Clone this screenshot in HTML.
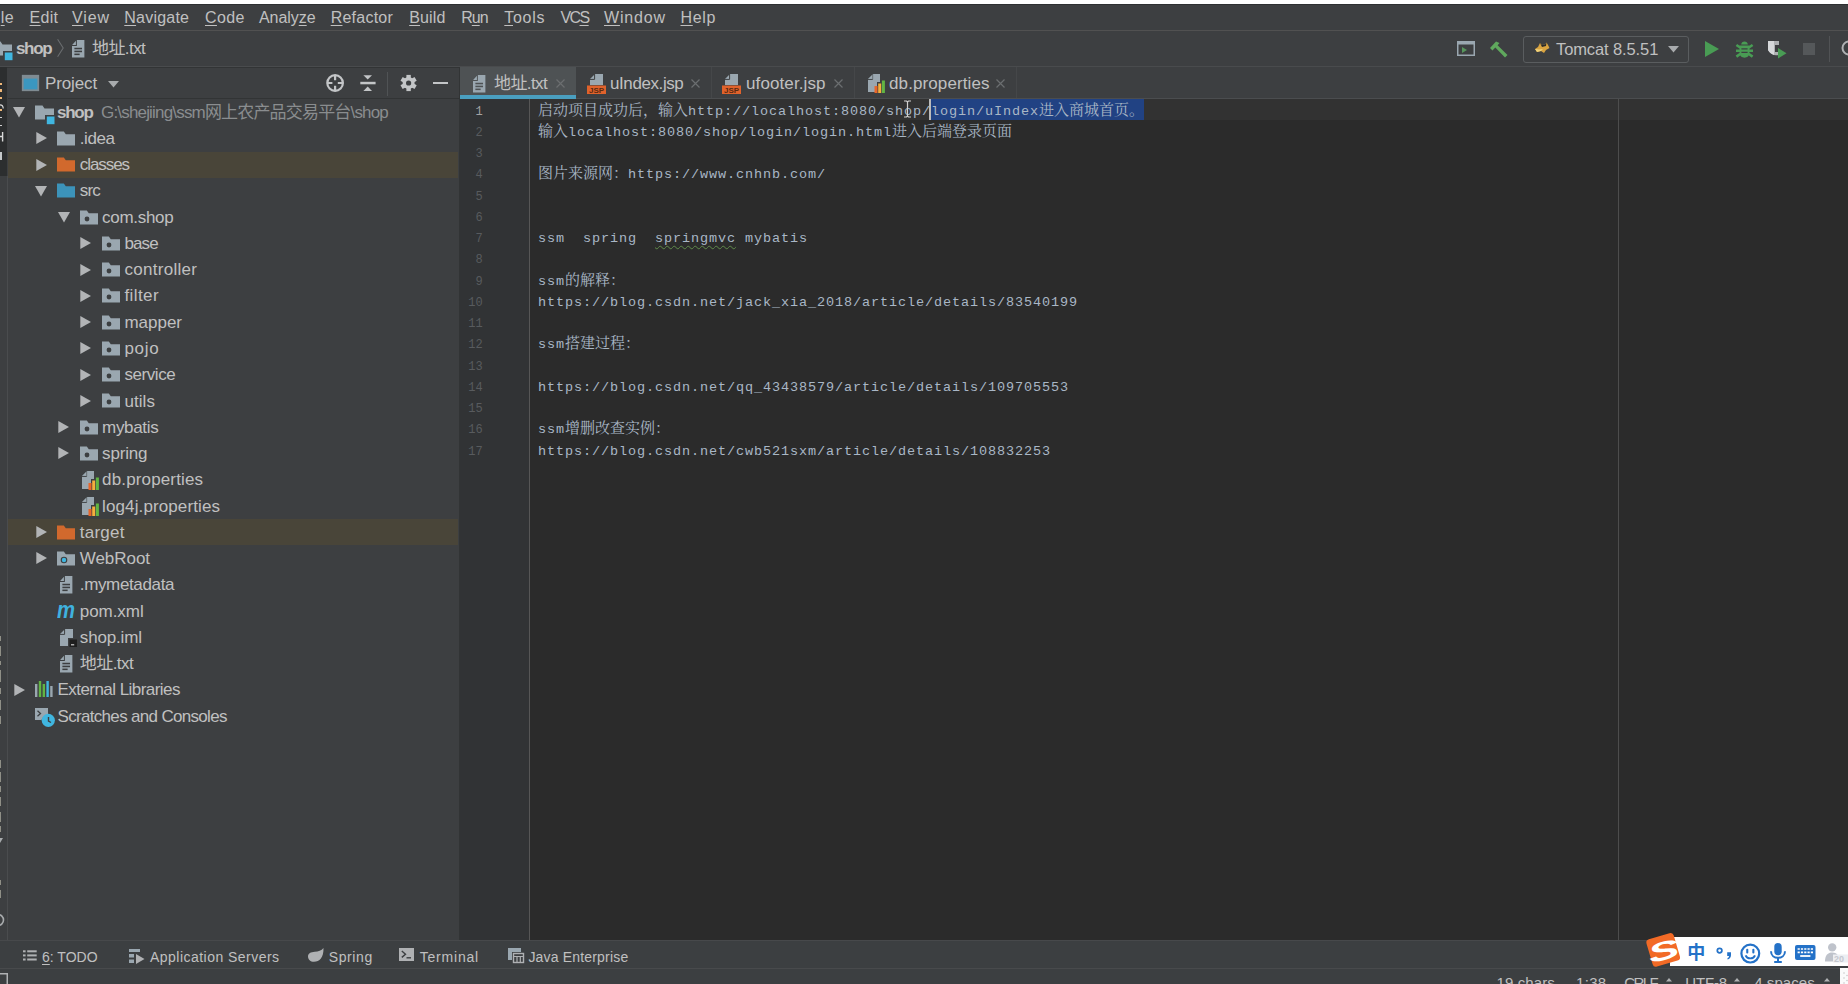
<!DOCTYPE html>
<html lang="zh"><head><meta charset="utf-8"><title>shop - 地址.txt</title>
<style>

html,body{margin:0;padding:0;}
body{width:1848px;height:984px;overflow:hidden;background:#3d3f41;position:relative;font-family:'Liberation Sans','Noto Sans CJK SC',sans-serif;color:#bbbbbb;font-size:17px;}
.a{position:absolute;}
.t{position:absolute;white-space:nowrap;line-height:20px;}
svg{position:absolute;overflow:visible;}
u{text-decoration:underline;text-underline-offset:2px;text-decoration-thickness:1px;}
.l{font-size:13.5px;letter-spacing:0.899px;}

</style></head><body>
<div class="a" style="left:0;top:0;width:1848px;height:4px;background:#ffffff"></div>
<div class="a" style="left:0;top:4px;width:1848px;height:1px;background:#2e3032"></div>
<div class="a" style="left:0;top:30px;width:1848px;height:1px;background:#515151"></div>
<div class="menu">
<div class="t" style="left:-13.5px;top:8.0px;color:#c0c0c0;font-family:'Liberation Sans','Noto Sans CJK SC',sans-serif;font-size:16px;font-weight:normal;line-height:20px;letter-spacing:0.43px;">Fi<u>l</u>e</div>
<div class="t" style="left:29.6px;top:8.0px;color:#c0c0c0;font-family:'Liberation Sans','Noto Sans CJK SC',sans-serif;font-size:16px;font-weight:normal;line-height:20px;letter-spacing:0.27px;"><u>E</u>dit</div>
<div class="t" style="left:72.0px;top:8.0px;color:#c0c0c0;font-family:'Liberation Sans','Noto Sans CJK SC',sans-serif;font-size:16px;font-weight:normal;line-height:20px;letter-spacing:0.86px;"><u>V</u>iew</div>
<div class="t" style="left:124.3px;top:8.0px;color:#c0c0c0;font-family:'Liberation Sans','Noto Sans CJK SC',sans-serif;font-size:16px;font-weight:normal;line-height:20px;letter-spacing:0.22px;"><u>N</u>avigate</div>
<div class="t" style="left:205.0px;top:8.0px;color:#c0c0c0;font-family:'Liberation Sans','Noto Sans CJK SC',sans-serif;font-size:16px;font-weight:normal;line-height:20px;letter-spacing:0.38px;"><u>C</u>ode</div>
<div class="t" style="left:259.0px;top:8.0px;color:#c0c0c0;font-family:'Liberation Sans','Noto Sans CJK SC',sans-serif;font-size:16px;font-weight:normal;line-height:20px;letter-spacing:-0.06px;">Analy<u>z</u>e</div>
<div class="t" style="left:330.7px;top:8.0px;color:#c0c0c0;font-family:'Liberation Sans','Noto Sans CJK SC',sans-serif;font-size:16px;font-weight:normal;line-height:20px;letter-spacing:0.23px;"><u>R</u>efactor</div>
<div class="t" style="left:409.2px;top:8.0px;color:#c0c0c0;font-family:'Liberation Sans','Noto Sans CJK SC',sans-serif;font-size:16px;font-weight:normal;line-height:20px;letter-spacing:0.16px;"><u>B</u>uild</div>
<div class="t" style="left:461.3px;top:8.0px;color:#c0c0c0;font-family:'Liberation Sans','Noto Sans CJK SC',sans-serif;font-size:16px;font-weight:normal;line-height:20px;letter-spacing:-1.04px;">R<u>u</u>n</div>
<div class="t" style="left:504.3px;top:8.0px;color:#c0c0c0;font-family:'Liberation Sans','Noto Sans CJK SC',sans-serif;font-size:16px;font-weight:normal;line-height:20px;letter-spacing:0.71px;"><u>T</u>ools</div>
<div class="t" style="left:560.4px;top:8.0px;color:#c0c0c0;font-family:'Liberation Sans','Noto Sans CJK SC',sans-serif;font-size:16px;font-weight:normal;line-height:20px;letter-spacing:-1.55px;">VC<u>S</u></div>
<div class="t" style="left:604.0px;top:8.0px;color:#c0c0c0;font-family:'Liberation Sans','Noto Sans CJK SC',sans-serif;font-size:16px;font-weight:normal;line-height:20px;letter-spacing:0.82px;"><u>W</u>indow</div>
<div class="t" style="left:680.5px;top:8.0px;color:#c0c0c0;font-family:'Liberation Sans','Noto Sans CJK SC',sans-serif;font-size:16px;font-weight:normal;line-height:20px;letter-spacing:0.66px;"><u>H</u>elp</div>
</div>
<div class="a" style="left:0;top:66px;width:1848px;height:1px;background:#494b4d"></div>
<div class="a" style="left:0;top:67px;width:459px;height:1px;background:#323435"></div>
<svg style="left:-7px;top:40.5px" width="22" height="20" viewBox="0 0 22 20"><path d="M0 0.5H7.5L9.5 3.5H19V10H10V14.5H0Z" fill="#9aa7b0"/><rect x="11.8" y="11.5" width="7.7" height="7.7" fill="#40b6e0"/></svg>
<div class="t" style="left:16.0px;top:38.5px;color:#c0c0c0;font-family:'Liberation Sans','Noto Sans CJK SC',sans-serif;font-size:17px;font-weight:bold;line-height:20px;letter-spacing:-1.34px;">shop</div>
<svg style="left:57px;top:39px" width="7" height="18" viewBox="0 0 7 18"><path d="M0.6 0.3L6.2 9L0.6 17.7" stroke="#6a6d6f" stroke-width="1.1" fill="none"/></svg>
<svg style="left:72px;top:40px" width="12.4" height="17.6" viewBox="0 0 13 17" preserveAspectRatio="none"><path d="M5 0H13V17H0V5Z" fill="#9aa7b0"/><path d="M5 0V5H0Z" fill="#9aa7b0" opacity="0.55"/><path d="M4.6 0V5.4H0" stroke="#3d3f41" stroke-width="1" fill="none"/><rect x="2.5" y="7.5" width="8" height="1.5" fill="#3d3f41"/><rect x="2.5" y="10.3" width="8" height="1.5" fill="#3d3f41"/><rect x="2.5" y="13.1" width="5.5" height="1.5" fill="#3d3f41"/></svg>
<div class="t" style="left:92.0px;top:38.5px;color:#c0c0c0;font-family:'Liberation Sans','Noto Sans CJK SC',sans-serif;font-size:17px;font-weight:normal;line-height:20px;letter-spacing:-0.57px;">地址.txt</div>
<svg style="left:1457px;top:41px" width="18" height="15" viewBox="0 0 18 15"><rect x="0.75" y="0.75" width="16.5" height="13.5" fill="none" stroke="#9aa7b0" stroke-width="1.5"/><rect x="0" y="0" width="18" height="3.5" fill="#9aa7b0"/><path d="M5 6L10 9L5 12Z" fill="#57965c"/></svg>
<svg style="left:1489px;top:40px" width="20" height="18" viewBox="0 0 20 18"><path d="M1 8L7 1.5L10.5 3L8.6 5.2L18.5 15L16 17.5L6.3 7.6L3.5 10.5Z" fill="#5fa85d"/></svg>
<div class="a" style="left:1523px;top:36px;width:164px;height:25px;border:1px solid #5a5d5f;border-radius:3px;box-sizing:content-box"></div>
<svg style="left:1534px;top:42px" width="16" height="13" viewBox="0 0 16 13"><path d="M1 7L4 5L6 1L8 3L11 2.5L12.5 0.5L14 3L15.5 6L12 8L10 11L7 9L3 10Z" fill="#d9a441"/><path d="M6 1L8 3L11 2.5L12.5 0.5L12 4L8 5Z" fill="#2b2b2b"/><path d="M1 7L5 7.5L9 7L7 9L3 10Z" fill="#f1d27a"/></svg>
<div class="t" style="left:1556.0px;top:39.0px;color:#c0c0c0;font-family:'Liberation Sans','Noto Sans CJK SC',sans-serif;font-size:16.5px;font-weight:normal;line-height:20px;letter-spacing:-0.11px;">Tomcat 8.5.51</div>
<svg style="left:1668px;top:46px" width="11" height="7" viewBox="0 0 11 7"><path d="M0 0H11L5.5 6.5Z" fill="#a8abad"/></svg>
<svg style="left:1705px;top:41px" width="14" height="16" viewBox="0 0 14 16"><path d="M0 0L14 8L0 16Z" fill="#499c54"/></svg>
<svg style="left:1735.5px;top:40px" width="17" height="18" viewBox="0 0 17 18"><path d="M3.6 5.4H13.4V12.6C13.4 16 11 17.8 8.5 17.8C6 17.8 3.6 16 3.6 12.6Z" fill="#499c54"/><path d="M5.2 4.6C5.2 0.6 11.8 0.6 11.8 4.6Z" fill="#499c54"/><path d="M0.4 5L4.5 7.8M16.6 5L12.5 7.8M0 10.8H4.4M17 10.8H12.6M0.4 16.6L4.5 13.8M16.6 16.6L12.5 13.8" stroke="#499c54" stroke-width="2.6" fill="none"/><path d="M5.4 8.8H11.6M5.4 12.4H11.6" stroke="#3c3f41" stroke-width="1.3"/></svg>
<svg style="left:1767px;top:40px" width="20" height="19" viewBox="0 0 20 19"><path d="M1 1H12V5H8V12H12V14.5C9 16.5 4 15 1 10Z" fill="#afb1b3"/><path d="M1 1H7V15C4 14 2 12 1 10Z" fill="#d6d8da"/><path d="M11 8L19.5 13.2L11 18.5Z" fill="#499c54"/></svg>
<div class="a" style="left:1803px;top:42.8px;width:12.3px;height:12px;background:#55585a"></div>
<div class="a" style="left:1829px;top:36px;width:1px;height:26px;background:#515355"></div>
<svg style="left:1841px;top:40px" width="16" height="16" viewBox="0 0 16 16"><circle cx="8" cy="8" r="6.5" fill="none" stroke="#afb1b3" stroke-width="2"/></svg>
<div class="a" style="left:0;top:67px;width:7px;height:109px;background:#2c2e2f"></div>
<div class="a" style="left:7px;top:176px;width:1px;height:764px;background:#4a4c4e"></div>
<div class="a" style="left:0;top:82.5px;width:1.5px;height:2.6px;background:#f0b878"></div>
<div class="a" style="left:0;top:89px;width:1.5px;height:2.6px;background:#f0b878"></div>
<div class="a" style="left:0;top:96.5px;width:1.5px;height:2.6px;background:#f0b878"></div>
<div class="a" style="left:0;top:108.5px;width:1.5px;height:2.6px;background:#f0b878"></div>
<svg style="left:0px;top:104px" width="4" height="5" viewBox="0 0 4 5"><path d="M0 0.8C2.5 0.8 3.2 2 3.2 4.5" stroke="#d8d8d8" stroke-width="1.2" fill="none"/></svg>
<div class="a" style="left:0;top:116.5px;width:1.6px;height:1.3px;background:#d0d0d0"></div>
<div class="a" style="left:0;top:125px;width:1.6px;height:1.3px;background:#d0d0d0"></div>
<svg style="left:0px;top:132px" width="4" height="10" viewBox="0 0 4 10"><path d="M0 4.5H2.6M2.6 0V9.5" stroke="#d8d8d8" stroke-width="1.4" fill="none"/></svg>
<div class="a" style="left:0;top:151.5px;width:2px;height:8px;background:#c4c8ca"></div>
<div class="a" style="left:0;top:636px;width:1.2px;height:5px;background:#8f8f86"></div>
<div class="a" style="left:0;top:646px;width:1.2px;height:10px;background:#8f8f86"></div>
<div class="a" style="left:0;top:661px;width:1.2px;height:4px;background:#8f8f86"></div>
<div class="a" style="left:0;top:670px;width:1.2px;height:12px;background:#8f8f86"></div>
<div class="a" style="left:0;top:688px;width:1.2px;height:6px;background:#8f8f86"></div>
<div class="a" style="left:0;top:700px;width:1.2px;height:10px;background:#8f8f86"></div>
<div class="a" style="left:0;top:716px;width:1.2px;height:8px;background:#8f8f86"></div>
<div class="a" style="left:0;top:760px;width:1.2px;height:8px;background:#8f8f86"></div>
<div class="a" style="left:0;top:772px;width:1.2px;height:10px;background:#8f8f86"></div>
<div class="a" style="left:0;top:786px;width:1.2px;height:6px;background:#8f8f86"></div>
<div class="a" style="left:0;top:797px;width:1.2px;height:9px;background:#8f8f86"></div>
<div class="a" style="left:0;top:812px;width:1.2px;height:10px;background:#8f8f86"></div>
<div class="a" style="left:0;top:826px;width:1.2px;height:6px;background:#8f8f86"></div>
<div class="a" style="left:0;top:880px;width:1.2px;height:5px;background:#8f8f86"></div>
<div class="a" style="left:0;top:890px;width:1.2px;height:8px;background:#8f8f86"></div>
<svg style="left:-8px;top:838px" width="12" height="12" viewBox="0 0 12 12"><path d="M0 0H11L5.5 9Z" fill="#a8abad"/></svg>
<svg style="left:-9px;top:913px" width="14" height="14" viewBox="0 0 14 14"><circle cx="7" cy="7" r="5.5" fill="none" stroke="#a8abad" stroke-width="1.6"/></svg>
<div class="a" style="left:8px;top:98px;width:451px;height:1px;background:#323435"></div>
<svg style="left:22px;top:75px" width="17" height="16" viewBox="0 0 17 16"><rect x="0.75" y="0.75" width="15.5" height="14.5" fill="#3b97c0" stroke="#7f8b92" stroke-width="1.8"/><rect x="0" y="0" width="17" height="3.6" fill="#7f8b92"/></svg>
<div class="t" style="left:45.0px;top:73.8px;color:#c0c0c0;font-family:'Liberation Sans','Noto Sans CJK SC',sans-serif;font-size:17px;font-weight:normal;line-height:20px;letter-spacing:-0.12px;">Project</div>
<svg style="left:108px;top:81px" width="11" height="7" viewBox="0 0 11 7"><path d="M0 0H11L5.5 6.5Z" fill="#a8abad"/></svg>
<svg style="left:326px;top:74px" width="18" height="18" viewBox="0 0 18 18"><circle cx="9.1" cy="9" r="7.8" fill="none" stroke="#c3c5c7" stroke-width="2.2"/><path d="M9.1 1.5V6.3M9.1 11.7V16.5M1.6 9H6.4M11.8 9H16.6" stroke="#c3c5c7" stroke-width="2.2"/></svg>
<svg style="left:359.5px;top:74px" width="16" height="18" viewBox="0 0 16 18"><path d="M0.3 7.8H15.6V10.3H0.3Z" fill="#c3c5c7"/><path d="M3.4 1.3H12L7.7 5.6Z" fill="#c3c5c7"/><path d="M3.4 16.9H12L7.7 12.6Z" fill="#c3c5c7"/></svg>
<div class="a" style="left:387px;top:72px;width:1px;height:23.5px;background:#505355"></div>
<svg style="left:400px;top:74px" width="17" height="18" viewBox="0 0 17 18"><g transform="translate(8.6 9)"><rect x="-2.2" y="-8.1" width="4.4" height="5" fill="#c3c5c7" transform="rotate(0)"/><rect x="-2.2" y="-8.1" width="4.4" height="5" fill="#c3c5c7" transform="rotate(60)"/><rect x="-2.2" y="-8.1" width="4.4" height="5" fill="#c3c5c7" transform="rotate(120)"/><rect x="-2.2" y="-8.1" width="4.4" height="5" fill="#c3c5c7" transform="rotate(180)"/><rect x="-2.2" y="-8.1" width="4.4" height="5" fill="#c3c5c7" transform="rotate(240)"/><rect x="-2.2" y="-8.1" width="4.4" height="5" fill="#c3c5c7" transform="rotate(300)"/><circle r="6" fill="#c3c5c7"/><circle r="2.6" fill="#3c3f41"/></g></svg>
<div class="a" style="left:433.4px;top:81.8px;width:15px;height:2.5px;background:#c3c5c7"></div>
<div class="tree">
<svg style="left:13px;top:107px" width="12" height="10" viewBox="0 0 12 10"><path d="M0 0H12L6 10.5Z" fill="#b2b4b6"/></svg>
<svg style="left:35px;top:104.5px" width="22" height="20" viewBox="0 0 22 20"><path d="M0 0.5H7.5L9.5 3.5H19V10H10V14.5H0Z" fill="#9aa7b0"/><rect x="11.8" y="11.5" width="7.7" height="7.7" fill="#40b6e0"/></svg>
<div class="t" style="left:57.0px;top:102.6px;color:#c0c0c0;font-family:'Liberation Sans','Noto Sans CJK SC',sans-serif;font-size:17px;font-weight:bold;line-height:20px;letter-spacing:-1.24px;">shop</div>
<div class="t" style="left:101.0px;top:102.6px;color:#8a8d8f;font-family:'Liberation Sans','Noto Sans CJK SC',sans-serif;font-size:17px;font-weight:normal;line-height:20px;letter-spacing:-0.82px;">G:\shejiing\ssm网上农产品交易平台\shop</div>
<svg style="left:35.8px;top:132.26px" width="11" height="12" viewBox="0 0 11 12"><path d="M0.3 0L11 6L0.3 12Z" fill="#b2b4b6"/></svg>
<svg style="left:57.3px;top:130.76px" width="18" height="15" viewBox="0 0 18 15"><path d="M0 0.5H6.8L8.8 3.2H18V14.5H0Z" fill="#9aa7b0"/></svg>
<div class="t" style="left:79.8px;top:128.9px;color:#c0c0c0;font-family:'Liberation Sans','Noto Sans CJK SC',sans-serif;font-size:17px;font-weight:normal;line-height:20px;letter-spacing:-0.42px;">.idea</div>
<div class="a" style="left:8px;top:151.5px;width:450px;height:26px;background:#494539"></div>
<svg style="left:35.8px;top:158.52px" width="11" height="12" viewBox="0 0 11 12"><path d="M0.3 0L11 6L0.3 12Z" fill="#b2b4b6"/></svg>
<svg style="left:57.3px;top:157.02px" width="18" height="15" viewBox="0 0 18 15"><path d="M0 0.5H6.8L8.8 3.2H18V14.5H0Z" fill="#d1692d"/></svg>
<div class="t" style="left:79.8px;top:155.1px;color:#c0c0c0;font-family:'Liberation Sans','Noto Sans CJK SC',sans-serif;font-size:17px;font-weight:normal;line-height:20px;letter-spacing:-1.08px;">classes</div>
<svg style="left:35.3px;top:185.78px" width="12" height="10" viewBox="0 0 12 10"><path d="M0 0H12L6 10.5Z" fill="#b2b4b6"/></svg>
<svg style="left:57.3px;top:183.28px" width="18" height="15" viewBox="0 0 18 15"><path d="M0 0.5H6.8L8.8 3.2H18V14.5H0Z" fill="#3c93ba"/></svg>
<div class="t" style="left:79.8px;top:181.4px;color:#c0c0c0;font-family:'Liberation Sans','Noto Sans CJK SC',sans-serif;font-size:17px;font-weight:normal;line-height:20px;letter-spacing:-0.89px;">src</div>
<svg style="left:57.6px;top:212.04px" width="12" height="10" viewBox="0 0 12 10"><path d="M0 0H12L6 10.5Z" fill="#b2b4b6"/></svg>
<svg style="left:79.6px;top:209.54px" width="18" height="15" viewBox="0 0 18 15"><path d="M0 0.5H6.8L8.8 3.2H18V14.5H0Z" fill="#9aa7b0"/><circle cx="7" cy="9" r="2.4" fill="#3c3f41"/></svg>
<div class="t" style="left:102.1px;top:207.6px;color:#c0c0c0;font-family:'Liberation Sans','Noto Sans CJK SC',sans-serif;font-size:17px;font-weight:normal;line-height:20px;letter-spacing:-0.30px;">com.shop</div>
<svg style="left:80.4px;top:237.3px" width="11" height="12" viewBox="0 0 11 12"><path d="M0.3 0L11 6L0.3 12Z" fill="#b2b4b6"/></svg>
<svg style="left:101.9px;top:235.8px" width="18" height="15" viewBox="0 0 18 15"><path d="M0 0.5H6.8L8.8 3.2H18V14.5H0Z" fill="#9aa7b0"/><circle cx="7" cy="9" r="2.4" fill="#3c3f41"/></svg>
<div class="t" style="left:124.4px;top:233.9px;color:#c0c0c0;font-family:'Liberation Sans','Noto Sans CJK SC',sans-serif;font-size:17px;font-weight:normal;line-height:20px;letter-spacing:-0.86px;">base</div>
<svg style="left:80.4px;top:263.56px" width="11" height="12" viewBox="0 0 11 12"><path d="M0.3 0L11 6L0.3 12Z" fill="#b2b4b6"/></svg>
<svg style="left:101.9px;top:262.06px" width="18" height="15" viewBox="0 0 18 15"><path d="M0 0.5H6.8L8.8 3.2H18V14.5H0Z" fill="#9aa7b0"/><circle cx="7" cy="9" r="2.4" fill="#3c3f41"/></svg>
<div class="t" style="left:124.4px;top:260.2px;color:#c0c0c0;font-family:'Liberation Sans','Noto Sans CJK SC',sans-serif;font-size:17px;font-weight:normal;line-height:20px;letter-spacing:0.30px;">controller</div>
<svg style="left:80.4px;top:289.82px" width="11" height="12" viewBox="0 0 11 12"><path d="M0.3 0L11 6L0.3 12Z" fill="#b2b4b6"/></svg>
<svg style="left:101.9px;top:288.32px" width="18" height="15" viewBox="0 0 18 15"><path d="M0 0.5H6.8L8.8 3.2H18V14.5H0Z" fill="#9aa7b0"/><circle cx="7" cy="9" r="2.4" fill="#3c3f41"/></svg>
<div class="t" style="left:124.4px;top:286.4px;color:#c0c0c0;font-family:'Liberation Sans','Noto Sans CJK SC',sans-serif;font-size:17px;font-weight:normal;line-height:20px;letter-spacing:0.43px;">filter</div>
<svg style="left:80.4px;top:316.08px" width="11" height="12" viewBox="0 0 11 12"><path d="M0.3 0L11 6L0.3 12Z" fill="#b2b4b6"/></svg>
<svg style="left:101.9px;top:314.58px" width="18" height="15" viewBox="0 0 18 15"><path d="M0 0.5H6.8L8.8 3.2H18V14.5H0Z" fill="#9aa7b0"/><circle cx="7" cy="9" r="2.4" fill="#3c3f41"/></svg>
<div class="t" style="left:124.4px;top:312.7px;color:#c0c0c0;font-family:'Liberation Sans','Noto Sans CJK SC',sans-serif;font-size:17px;font-weight:normal;line-height:20px;letter-spacing:-0.01px;">mapper</div>
<svg style="left:80.4px;top:342.34px" width="11" height="12" viewBox="0 0 11 12"><path d="M0.3 0L11 6L0.3 12Z" fill="#b2b4b6"/></svg>
<svg style="left:101.9px;top:340.84px" width="18" height="15" viewBox="0 0 18 15"><path d="M0 0.5H6.8L8.8 3.2H18V14.5H0Z" fill="#9aa7b0"/><circle cx="7" cy="9" r="2.4" fill="#3c3f41"/></svg>
<div class="t" style="left:124.4px;top:338.9px;color:#c0c0c0;font-family:'Liberation Sans','Noto Sans CJK SC',sans-serif;font-size:17px;font-weight:normal;line-height:20px;letter-spacing:0.72px;">pojo</div>
<svg style="left:80.4px;top:368.6px" width="11" height="12" viewBox="0 0 11 12"><path d="M0.3 0L11 6L0.3 12Z" fill="#b2b4b6"/></svg>
<svg style="left:101.9px;top:367.1px" width="18" height="15" viewBox="0 0 18 15"><path d="M0 0.5H6.8L8.8 3.2H18V14.5H0Z" fill="#9aa7b0"/><circle cx="7" cy="9" r="2.4" fill="#3c3f41"/></svg>
<div class="t" style="left:124.4px;top:365.2px;color:#c0c0c0;font-family:'Liberation Sans','Noto Sans CJK SC',sans-serif;font-size:17px;font-weight:normal;line-height:20px;letter-spacing:-0.43px;">service</div>
<svg style="left:80.4px;top:394.86px" width="11" height="12" viewBox="0 0 11 12"><path d="M0.3 0L11 6L0.3 12Z" fill="#b2b4b6"/></svg>
<svg style="left:101.9px;top:393.36px" width="18" height="15" viewBox="0 0 18 15"><path d="M0 0.5H6.8L8.8 3.2H18V14.5H0Z" fill="#9aa7b0"/><circle cx="7" cy="9" r="2.4" fill="#3c3f41"/></svg>
<div class="t" style="left:124.4px;top:391.5px;color:#c0c0c0;font-family:'Liberation Sans','Noto Sans CJK SC',sans-serif;font-size:17px;font-weight:normal;line-height:20px;letter-spacing:0.09px;">utils</div>
<svg style="left:58.1px;top:421.12px" width="11" height="12" viewBox="0 0 11 12"><path d="M0.3 0L11 6L0.3 12Z" fill="#b2b4b6"/></svg>
<svg style="left:79.6px;top:419.62px" width="18" height="15" viewBox="0 0 18 15"><path d="M0 0.5H6.8L8.8 3.2H18V14.5H0Z" fill="#9aa7b0"/><circle cx="7" cy="9" r="2.4" fill="#3c3f41"/></svg>
<div class="t" style="left:102.1px;top:417.7px;color:#c0c0c0;font-family:'Liberation Sans','Noto Sans CJK SC',sans-serif;font-size:17px;font-weight:normal;line-height:20px;letter-spacing:-0.33px;">mybatis</div>
<svg style="left:58.1px;top:447.38px" width="11" height="12" viewBox="0 0 11 12"><path d="M0.3 0L11 6L0.3 12Z" fill="#b2b4b6"/></svg>
<svg style="left:79.6px;top:445.88px" width="18" height="15" viewBox="0 0 18 15"><path d="M0 0.5H6.8L8.8 3.2H18V14.5H0Z" fill="#9aa7b0"/><circle cx="7" cy="9" r="2.4" fill="#3c3f41"/></svg>
<div class="t" style="left:102.1px;top:444.0px;color:#c0c0c0;font-family:'Liberation Sans','Noto Sans CJK SC',sans-serif;font-size:17px;font-weight:normal;line-height:20px;letter-spacing:-0.18px;">spring</div>
<svg style="left:81.8px;top:471.04px" width="17" height="19" viewBox="0 0 17 19"><path d="M5 0H12V8H9V18H0V5Z" fill="#9aa7b0"/><path d="M4.6 0V5.4H0" stroke="#3d3f41" stroke-width="1" fill="none"/><path d="M5 0V5H0Z" fill="#9aa7b0" opacity="0.5"/><rect x="6.5" y="12" width="3" height="7" fill="#e8662a"/><rect x="10.2" y="9.5" width="3" height="9.5" fill="#f4af3d"/><rect x="13.9" y="6.5" width="3" height="12.5" fill="#62b543"/></svg>
<div class="t" style="left:102.1px;top:470.2px;color:#c0c0c0;font-family:'Liberation Sans','Noto Sans CJK SC',sans-serif;font-size:17px;font-weight:normal;line-height:20px;letter-spacing:0.14px;">db.properties</div>
<svg style="left:81.8px;top:497.3px" width="17" height="19" viewBox="0 0 17 19"><path d="M5 0H12V8H9V18H0V5Z" fill="#9aa7b0"/><path d="M4.6 0V5.4H0" stroke="#3d3f41" stroke-width="1" fill="none"/><path d="M5 0V5H0Z" fill="#9aa7b0" opacity="0.5"/><rect x="6.5" y="12" width="3" height="7" fill="#e8662a"/><rect x="10.2" y="9.5" width="3" height="9.5" fill="#f4af3d"/><rect x="13.9" y="6.5" width="3" height="12.5" fill="#62b543"/></svg>
<div class="t" style="left:102.1px;top:496.5px;color:#c0c0c0;font-family:'Liberation Sans','Noto Sans CJK SC',sans-serif;font-size:17px;font-weight:normal;line-height:20px;letter-spacing:0.11px;">log4j.properties</div>
<div class="a" style="left:8px;top:519.2px;width:450px;height:26px;background:#494539"></div>
<svg style="left:35.8px;top:526.16px" width="11" height="12" viewBox="0 0 11 12"><path d="M0.3 0L11 6L0.3 12Z" fill="#b2b4b6"/></svg>
<svg style="left:57.3px;top:524.66px" width="18" height="15" viewBox="0 0 18 15"><path d="M0 0.5H6.8L8.8 3.2H18V14.5H0Z" fill="#d1692d"/></svg>
<div class="t" style="left:79.8px;top:522.8px;color:#c0c0c0;font-family:'Liberation Sans','Noto Sans CJK SC',sans-serif;font-size:17px;font-weight:normal;line-height:20px;letter-spacing:0.24px;">target</div>
<svg style="left:35.8px;top:552.42px" width="11" height="12" viewBox="0 0 11 12"><path d="M0.3 0L11 6L0.3 12Z" fill="#b2b4b6"/></svg>
<svg style="left:57.3px;top:550.92px" width="18" height="15" viewBox="0 0 18 15"><path d="M0 0.5H6.8L8.8 3.2H18V14.5H0Z" fill="#9aa7b0"/><circle cx="7" cy="9" r="3.3" fill="#3c3f41"/><circle cx="7" cy="9" r="2.2" fill="#40b6e0"/></svg>
<div class="t" style="left:79.8px;top:549.0px;color:#c0c0c0;font-family:'Liberation Sans','Noto Sans CJK SC',sans-serif;font-size:17px;font-weight:normal;line-height:20px;letter-spacing:-0.06px;">WebRoot</div>
<svg style="left:59.5px;top:576.08px" width="12.4" height="17.6" viewBox="0 0 13 17" preserveAspectRatio="none"><path d="M5 0H13V17H0V5Z" fill="#9aa7b0"/><path d="M5 0V5H0Z" fill="#9aa7b0" opacity="0.55"/><path d="M4.6 0V5.4H0" stroke="#3d3f41" stroke-width="1" fill="none"/><rect x="2.5" y="7.5" width="8" height="1.5" fill="#3d3f41"/><rect x="2.5" y="10.3" width="8" height="1.5" fill="#3d3f41"/><rect x="2.5" y="13.1" width="5.5" height="1.5" fill="#3d3f41"/></svg>
<div class="t" style="left:79.8px;top:575.3px;color:#c0c0c0;font-family:'Liberation Sans','Noto Sans CJK SC',sans-serif;font-size:17px;font-weight:normal;line-height:20px;letter-spacing:-0.36px;">.mymetadata</div>
<div class="t" style="left:57.0px;top:597.9px;color:#3fb1df;font-family:'Liberation Sans','Noto Sans CJK SC',sans-serif;font-size:23px;font-weight:bold;line-height:24px;font-style:italic;transform:scaleX(0.88);transform-origin:0 0;">m</div>
<div class="t" style="left:79.8px;top:601.5px;color:#c0c0c0;font-family:'Liberation Sans','Noto Sans CJK SC',sans-serif;font-size:17px;font-weight:normal;line-height:20px;letter-spacing:-0.06px;">pom.xml</div>
<svg style="left:59.5px;top:629.2px" width="17" height="19" viewBox="0 0 17 19"><path d="M5 0H13V9H8V17H0V5Z" fill="#9aa7b0"/><path d="M4.6 0V5.4H0" stroke="#3d3f41" stroke-width="1" fill="none"/><rect x="9.5" y="10.5" width="7.5" height="7.5" fill="#1e1e1e"/><rect x="11" y="15.2" width="3.2" height="1.2" fill="#d0d0d0"/></svg>
<div class="t" style="left:79.8px;top:627.8px;color:#c0c0c0;font-family:'Liberation Sans','Noto Sans CJK SC',sans-serif;font-size:17px;font-weight:normal;line-height:20px;letter-spacing:-0.16px;">shop.iml</div>
<svg style="left:59.5px;top:654.86px" width="12.4" height="17.6" viewBox="0 0 13 17" preserveAspectRatio="none"><path d="M5 0H13V17H0V5Z" fill="#9aa7b0"/><path d="M5 0V5H0Z" fill="#9aa7b0" opacity="0.55"/><path d="M4.6 0V5.4H0" stroke="#3d3f41" stroke-width="1" fill="none"/><rect x="2.5" y="7.5" width="8" height="1.5" fill="#3d3f41"/><rect x="2.5" y="10.3" width="8" height="1.5" fill="#3d3f41"/><rect x="2.5" y="13.1" width="5.5" height="1.5" fill="#3d3f41"/></svg>
<div class="t" style="left:79.8px;top:654.1px;color:#c0c0c0;font-family:'Liberation Sans','Noto Sans CJK SC',sans-serif;font-size:17px;font-weight:normal;line-height:20px;letter-spacing:-0.55px;">地址.txt</div>
<svg style="left:13.5px;top:683.72px" width="11" height="12" viewBox="0 0 11 12"><path d="M0.3 0L11 6L0.3 12Z" fill="#b2b4b6"/></svg>
<svg style="left:35px;top:680.92px" width="18" height="16" viewBox="0 0 18 16"><rect x="0" y="3" width="2.4" height="13" fill="#9aa7b0"/><rect x="3.8" y="0" width="2.4" height="16" fill="#62b543"/><rect x="7.6" y="3" width="2.4" height="13" fill="#62b543"/><rect x="11.4" y="0" width="2.4" height="16" fill="#40b6e0"/><rect x="15.2" y="5" width="2.4" height="11" fill="#9aa7b0"/></svg>
<div class="t" style="left:57.5px;top:680.3px;color:#c0c0c0;font-family:'Liberation Sans','Noto Sans CJK SC',sans-serif;font-size:17px;font-weight:normal;line-height:20px;letter-spacing:-0.55px;">External Libraries</div>
<svg style="left:35.3px;top:707.98px" width="20" height="19" viewBox="0 0 20 19"><path d="M0 0H13V7.5A7 7 0 0 0 6.5 12H0Z" fill="#9aa7b0"/><path d="M2.5 2.8L5.5 5.5L2.5 8.2" stroke="#3c3f41" stroke-width="1.3" fill="none"/><circle cx="13.3" cy="12.3" r="6.6" fill="#40b6e0"/><path d="M13.5 9V13L16 14.5" stroke="#3c3f41" stroke-width="1.4" fill="none"/></svg>
<div class="t" style="left:57.5px;top:706.6px;color:#c0c0c0;font-family:'Liberation Sans','Noto Sans CJK SC',sans-serif;font-size:17px;font-weight:normal;line-height:20px;letter-spacing:-0.68px;">Scratches and Consoles</div>
</div>
<div class="a" style="left:458.5px;top:67px;width:1.5px;height:873px;background:#323435"></div>
<div class="tab">
<div class="a" style="left:460px;top:67px;width:116px;height:28px;background:#4e5254"></div>
<div class="a" style="left:460px;top:95px;width:116px;height:4px;background:#4a9fc0"></div>
<div class="a" style="left:711px;top:67px;width:1px;height:32px;background:#454749"></div>
<div class="a" style="left:854px;top:67px;width:1px;height:32px;background:#454749"></div>
<div class="a" style="left:1016px;top:67px;width:1px;height:32px;background:#454749"></div>
<div class="a" style="left:576px;top:98px;width:1272px;height:1px;background:#4b4d4f"></div>
<svg style="left:473px;top:75px" width="12.4" height="17.6" viewBox="0 0 13 17" preserveAspectRatio="none"><path d="M5 0H13V17H0V5Z" fill="#9aa7b0"/><path d="M5 0V5H0Z" fill="#9aa7b0" opacity="0.55"/><path d="M4.6 0V5.4H0" stroke="#4e5254" stroke-width="1" fill="none"/><rect x="2.5" y="7.5" width="8" height="1.5" fill="#4e5254"/><rect x="2.5" y="10.3" width="8" height="1.5" fill="#4e5254"/><rect x="2.5" y="13.1" width="5.5" height="1.5" fill="#4e5254"/></svg>
<div class="t" style="left:494.0px;top:73.8px;color:#c0c0c0;font-family:'Liberation Sans','Noto Sans CJK SC',sans-serif;font-size:17px;font-weight:normal;line-height:20px;letter-spacing:-0.59px;">地址.txt</div>
<svg style="left:587px;top:74px" width="20" height="21" viewBox="0 0 20 21"><path d="M8 0H16V11H3V5Z" fill="#9aa7b0"/><path d="M7.6 0V5.4H3" stroke="#3d3f41" stroke-width="1" fill="none"/><rect x="0" y="11.5" width="19" height="8.5" fill="#e0622b"/><text x="9.5" y="18.6" font-family='"Liberation Sans",sans-serif' font-size="8" font-weight="bold" fill="#5a2a12" text-anchor="middle">JSP</text></svg>
<div class="t" style="left:610.0px;top:73.8px;color:#c0c0c0;font-family:'Liberation Sans','Noto Sans CJK SC',sans-serif;font-size:17px;font-weight:normal;line-height:20px;letter-spacing:-0.41px;">uIndex.jsp</div>
<svg style="left:722px;top:74px" width="20" height="21" viewBox="0 0 20 21"><path d="M8 0H16V11H3V5Z" fill="#9aa7b0"/><path d="M7.6 0V5.4H3" stroke="#3d3f41" stroke-width="1" fill="none"/><rect x="0" y="11.5" width="19" height="8.5" fill="#e0622b"/><text x="9.5" y="18.6" font-family='"Liberation Sans",sans-serif' font-size="8" font-weight="bold" fill="#5a2a12" text-anchor="middle">JSP</text></svg>
<div class="t" style="left:746.0px;top:73.8px;color:#c0c0c0;font-family:'Liberation Sans','Noto Sans CJK SC',sans-serif;font-size:17px;font-weight:normal;line-height:20px;letter-spacing:0.11px;">ufooter.jsp</div>
<svg style="left:868px;top:74px" width="17" height="19" viewBox="0 0 17 19"><path d="M5 0H12V8H9V18H0V5Z" fill="#9aa7b0"/><path d="M4.6 0V5.4H0" stroke="#3d3f41" stroke-width="1" fill="none"/><path d="M5 0V5H0Z" fill="#9aa7b0" opacity="0.5"/><rect x="6.5" y="12" width="3" height="7" fill="#e8662a"/><rect x="10.2" y="9.5" width="3" height="9.5" fill="#f4af3d"/><rect x="13.9" y="6.5" width="3" height="12.5" fill="#62b543"/></svg>
<div class="t" style="left:889.0px;top:73.8px;color:#c0c0c0;font-family:'Liberation Sans','Noto Sans CJK SC',sans-serif;font-size:17px;font-weight:normal;line-height:20px;letter-spacing:0.11px;">db.properties</div>
<svg style="left:556px;top:79px" width="9" height="9" viewBox="0 0 9 9"><path d="M0.5 0.5L8.5 8.5M8.5 0.5L0.5 8.5" stroke="#6b6e70" stroke-width="1.2"/></svg>
<svg style="left:691px;top:79px" width="9" height="9" viewBox="0 0 9 9"><path d="M0.5 0.5L8.5 8.5M8.5 0.5L0.5 8.5" stroke="#6b6e70" stroke-width="1.2"/></svg>
<svg style="left:834px;top:79px" width="9" height="9" viewBox="0 0 9 9"><path d="M0.5 0.5L8.5 8.5M8.5 0.5L0.5 8.5" stroke="#6b6e70" stroke-width="1.2"/></svg>
<svg style="left:996px;top:79px" width="9" height="9" viewBox="0 0 9 9"><path d="M0.5 0.5L8.5 8.5M8.5 0.5L0.5 8.5" stroke="#6b6e70" stroke-width="1.2"/></svg>
</div>
<div class="ed">
<div class="a" style="left:460px;top:99px;width:1388px;height:841px;background:#2b2b2b"></div>
<div class="a" style="left:460px;top:99px;width:69px;height:841px;background:#313335"></div>
<div class="a" style="left:529px;top:99px;width:1px;height:841px;background:#565656"></div>
<div class="a" style="left:530px;top:99px;width:1318px;height:21px;background:#323232"></div>
<div class="a" style="left:1618px;top:99px;width:1px;height:841px;background:#4d4d4d"></div>
<div class="a" style="left:931px;top:99px;width:213px;height:21px;background:#214283"></div>
<div class="a" style="left:929px;top:99px;width:2px;height:21px;background:#bbbbbb"></div>
<div class="t" style="left:475.4px;top:101.7px;color:#a4a3a3;font-family:'Liberation Mono','Noto Serif CJK SC',monospace;font-size:12px;font-weight:normal;line-height:20px;">1</div>
<div class="t" style="left:538.0px;top:100.7px;color:#a9b7c6;font-family:'Liberation Mono','Noto Serif CJK SC',monospace;font-size:15px;font-weight:normal;line-height:22px;white-space:pre;">启动项目成功后，输入<span class="l">http://localhost:8080/shop/login/uIndex</span>进入商城首页。</div>
<div class="t" style="left:475.4px;top:122.9px;color:#585b5e;font-family:'Liberation Mono','Noto Serif CJK SC',monospace;font-size:12px;font-weight:normal;line-height:20px;">2</div>
<div class="t" style="left:538.0px;top:121.9px;color:#a9b7c6;font-family:'Liberation Mono','Noto Serif CJK SC',monospace;font-size:15px;font-weight:normal;line-height:22px;white-space:pre;">输入<span class="l">localhost:8080/shop/login/login.html</span>进入后端登录页面</div>
<div class="t" style="left:475.4px;top:144.2px;color:#585b5e;font-family:'Liberation Mono','Noto Serif CJK SC',monospace;font-size:12px;font-weight:normal;line-height:20px;">3</div>
<div class="t" style="left:475.4px;top:165.4px;color:#585b5e;font-family:'Liberation Mono','Noto Serif CJK SC',monospace;font-size:12px;font-weight:normal;line-height:20px;">4</div>
<div class="t" style="left:538.0px;top:164.4px;color:#a9b7c6;font-family:'Liberation Mono','Noto Serif CJK SC',monospace;font-size:15px;font-weight:normal;line-height:22px;white-space:pre;">图片来源网：<span class="l">https://www.cnhnb.com/</span></div>
<div class="t" style="left:475.4px;top:186.7px;color:#585b5e;font-family:'Liberation Mono','Noto Serif CJK SC',monospace;font-size:12px;font-weight:normal;line-height:20px;">5</div>
<div class="t" style="left:475.4px;top:207.9px;color:#585b5e;font-family:'Liberation Mono','Noto Serif CJK SC',monospace;font-size:12px;font-weight:normal;line-height:20px;">6</div>
<div class="t" style="left:475.4px;top:229.1px;color:#585b5e;font-family:'Liberation Mono','Noto Serif CJK SC',monospace;font-size:12px;font-weight:normal;line-height:20px;">7</div>
<div class="t" style="left:538.0px;top:228.1px;color:#a9b7c6;font-family:'Liberation Mono','Noto Serif CJK SC',monospace;font-size:15px;font-weight:normal;line-height:22px;white-space:pre;"><span class="l">ssm  spring  </span><span style="text-decoration:underline wavy #5f8a4a;text-decoration-thickness:1px;text-underline-offset:3px;text-decoration-skip-ink:none"><span class="l">springmvc</span></span><span class="l"> mybatis</span></div>
<div class="t" style="left:475.4px;top:250.4px;color:#585b5e;font-family:'Liberation Mono','Noto Serif CJK SC',monospace;font-size:12px;font-weight:normal;line-height:20px;">8</div>
<div class="t" style="left:475.4px;top:271.6px;color:#585b5e;font-family:'Liberation Mono','Noto Serif CJK SC',monospace;font-size:12px;font-weight:normal;line-height:20px;">9</div>
<div class="t" style="left:538.0px;top:270.6px;color:#a9b7c6;font-family:'Liberation Mono','Noto Serif CJK SC',monospace;font-size:15px;font-weight:normal;line-height:22px;white-space:pre;"><span class="l">ssm</span>的解释：</div>
<div class="t" style="left:468.2px;top:292.9px;color:#585b5e;font-family:'Liberation Mono','Noto Serif CJK SC',monospace;font-size:12px;font-weight:normal;line-height:20px;">10</div>
<div class="t" style="left:538.0px;top:291.9px;color:#a9b7c6;font-family:'Liberation Mono','Noto Serif CJK SC',monospace;font-size:15px;font-weight:normal;line-height:22px;white-space:pre;"><span class="l">https://blog.csdn.net/jack_xia_2018/article/details/83540199</span></div>
<div class="t" style="left:468.2px;top:314.1px;color:#585b5e;font-family:'Liberation Mono','Noto Serif CJK SC',monospace;font-size:12px;font-weight:normal;line-height:20px;">11</div>
<div class="t" style="left:468.2px;top:335.3px;color:#585b5e;font-family:'Liberation Mono','Noto Serif CJK SC',monospace;font-size:12px;font-weight:normal;line-height:20px;">12</div>
<div class="t" style="left:538.0px;top:334.3px;color:#a9b7c6;font-family:'Liberation Mono','Noto Serif CJK SC',monospace;font-size:15px;font-weight:normal;line-height:22px;white-space:pre;"><span class="l">ssm</span>搭建过程：</div>
<div class="t" style="left:468.2px;top:356.6px;color:#585b5e;font-family:'Liberation Mono','Noto Serif CJK SC',monospace;font-size:12px;font-weight:normal;line-height:20px;">13</div>
<div class="t" style="left:468.2px;top:377.8px;color:#585b5e;font-family:'Liberation Mono','Noto Serif CJK SC',monospace;font-size:12px;font-weight:normal;line-height:20px;">14</div>
<div class="t" style="left:538.0px;top:376.8px;color:#a9b7c6;font-family:'Liberation Mono','Noto Serif CJK SC',monospace;font-size:15px;font-weight:normal;line-height:22px;white-space:pre;"><span class="l">https://blog.csdn.net/qq_43438579/article/details/109705553</span></div>
<div class="t" style="left:468.2px;top:399.1px;color:#585b5e;font-family:'Liberation Mono','Noto Serif CJK SC',monospace;font-size:12px;font-weight:normal;line-height:20px;">15</div>
<div class="t" style="left:468.2px;top:420.3px;color:#585b5e;font-family:'Liberation Mono','Noto Serif CJK SC',monospace;font-size:12px;font-weight:normal;line-height:20px;">16</div>
<div class="t" style="left:538.0px;top:419.3px;color:#a9b7c6;font-family:'Liberation Mono','Noto Serif CJK SC',monospace;font-size:15px;font-weight:normal;line-height:22px;white-space:pre;"><span class="l">ssm</span>增删改查实例：</div>
<div class="t" style="left:468.2px;top:441.5px;color:#585b5e;font-family:'Liberation Mono','Noto Serif CJK SC',monospace;font-size:12px;font-weight:normal;line-height:20px;">17</div>
<div class="t" style="left:538.0px;top:440.5px;color:#a9b7c6;font-family:'Liberation Mono','Noto Serif CJK SC',monospace;font-size:15px;font-weight:normal;line-height:22px;white-space:pre;"><span class="l">https://blog.csdn.net/cwb521sxm/article/details/108832253</span></div>
<svg style="left:903px;top:100px" width="9" height="18" viewBox="0 0 9 18"><path d="M1 1H3.5L4.5 2L5.5 1H8M4.5 2V16M1 17H3.5L4.5 16L5.5 17H8" stroke="#d0d0d0" stroke-width="1.2" fill="none"/></svg>
</div>
<div class="a" style="left:0;top:940px;width:1848px;height:44px;background:#3c3f41"></div>
<div class="a" style="left:0;top:940px;width:1848px;height:1px;background:#47494b"></div>
<div class="a" style="left:0;top:967.5px;width:1848px;height:1px;background:#484a4c"></div>
<div class="tw">
<svg style="left:23px;top:950px" width="14" height="11" viewBox="0 0 14 11"><rect x="0" y="0.3" width="2.6" height="2" fill="#afb1b3"/><rect x="4.2" y="0.3" width="9.5" height="2" fill="#afb1b3"/><rect x="0" y="4.4" width="2.6" height="2" fill="#afb1b3"/><rect x="4.2" y="4.4" width="9.5" height="2" fill="#afb1b3"/><rect x="0" y="8.5" width="2.6" height="2" fill="#afb1b3"/><rect x="4.2" y="8.5" width="9.5" height="2" fill="#afb1b3"/></svg>
<div class="t" style="left:42.0px;top:946.5px;color:#c0c0c0;font-family:'Liberation Sans','Noto Sans CJK SC',sans-serif;font-size:14px;font-weight:normal;line-height:20px;letter-spacing:0.01px;"><u>6</u>: TODO</div>
<svg style="left:129px;top:949px" width="16" height="15" viewBox="0 0 16 15"><rect x="0" y="0" width="11" height="3" fill="#9aa7b0"/><rect x="0" y="5" width="5" height="3.5" fill="#9aa7b0"/><rect x="0" y="10.5" width="5" height="3.5" fill="#9aa7b0"/><path d="M7 5L15.5 10L7 15Z" fill="#afb1b3"/></svg>
<div class="t" style="left:150.0px;top:946.5px;color:#c0c0c0;font-family:'Liberation Sans','Noto Sans CJK SC',sans-serif;font-size:14px;font-weight:normal;line-height:20px;letter-spacing:0.47px;">Application Servers</div>
<svg style="left:307.5px;top:947.5px" width="16" height="14" viewBox="0 0 16 14"><path d="M15.5 0C15.8 9.5 11.5 13.8 6 13.8C2.4 13.8 0 11.4 0 8.4C0 5.4 2.8 3.9 6.8 3.7C10.4 3.5 13.4 2.6 15.5 0Z" fill="#afb1b3"/></svg>
<div class="t" style="left:328.8px;top:946.5px;color:#c0c0c0;font-family:'Liberation Sans','Noto Sans CJK SC',sans-serif;font-size:14px;font-weight:normal;line-height:20px;letter-spacing:0.59px;">Spring</div>
<svg style="left:399px;top:948px" width="15" height="13" viewBox="0 0 15 13"><rect x="0" y="0" width="15" height="13" fill="#afb1b3"/><path d="M2.8 3L6.5 6.2L2.8 9.4" stroke="#3c3f41" stroke-width="1.4" fill="none"/><path d="M7.5 9.8H12" stroke="#3c3f41" stroke-width="1.4"/></svg>
<div class="t" style="left:419.7px;top:946.5px;color:#c0c0c0;font-family:'Liberation Sans','Noto Sans CJK SC',sans-serif;font-size:14px;font-weight:normal;line-height:20px;letter-spacing:0.80px;">Terminal</div>
<svg style="left:508px;top:948px" width="16" height="15" viewBox="0 0 16 15"><path d="M0 0H13V4H4V12H0Z" fill="#9aa7b0"/><rect x="5.5" y="5.5" width="10" height="9" fill="none" stroke="#afb1b3" stroke-width="1.4"/><path d="M5.5 8.5H15.5M9 8.5V14.5M12.3 8.5V14.5" stroke="#afb1b3" stroke-width="1.2"/></svg>
<div class="t" style="left:528.4px;top:946.5px;color:#c0c0c0;font-family:'Liberation Sans','Noto Sans CJK SC',sans-serif;font-size:14px;font-weight:normal;line-height:20px;letter-spacing:0.18px;">Java Enterprise</div>
</div>
<div class="sb">
<svg style="left:-2px;top:973px" width="10" height="12" viewBox="0 0 10 12"><rect x="0.75" y="0.75" width="8.5" height="12" fill="none" stroke="#afb1b3" stroke-width="1.5"/></svg>
<div class="t" style="left:1496.5px;top:973.0px;color:#c0c0c0;font-family:'Liberation Sans','Noto Sans CJK SC',sans-serif;font-size:15px;font-weight:normal;line-height:20px;letter-spacing:0.11px;">19 chars</div>
<div class="t" style="left:1576.0px;top:973.0px;color:#c0c0c0;font-family:'Liberation Sans','Noto Sans CJK SC',sans-serif;font-size:15px;font-weight:normal;line-height:20px;letter-spacing:0.33px;">1:38</div>
<div class="t" style="left:1624.2px;top:973.0px;color:#c0c0c0;font-family:'Liberation Sans','Noto Sans CJK SC',sans-serif;font-size:15px;font-weight:normal;line-height:20px;letter-spacing:-1.59px;">CRLF</div>
<div class="t" style="left:1685.2px;top:973.0px;color:#c0c0c0;font-family:'Liberation Sans','Noto Sans CJK SC',sans-serif;font-size:15px;font-weight:normal;line-height:20px;letter-spacing:-0.12px;">UTF-8</div>
<div class="t" style="left:1754.2px;top:973.0px;color:#c0c0c0;font-family:'Liberation Sans','Noto Sans CJK SC',sans-serif;font-size:15px;font-weight:normal;line-height:20px;letter-spacing:0.08px;">4 spaces</div>
<svg style="left:1665.5px;top:978.4px" width="6" height="3.6" viewBox="0 0 6 3.6"><path d="M0 3.6H6L3 0Z" fill="#afb1b3"/></svg>
<svg style="left:1733.5px;top:978.4px" width="6" height="3.6" viewBox="0 0 6 3.6"><path d="M0 3.6H6L3 0Z" fill="#afb1b3"/></svg>
<svg style="left:1823.5px;top:978.4px" width="6" height="3.6" viewBox="0 0 6 3.6"><path d="M0 3.6H6L3 0Z" fill="#afb1b3"/></svg>
<div class="a" style="left:1839.5px;top:968px;width:9px;height:16px;background:#fafafa"></div>
<svg style="left:1843px;top:972px" width="5" height="12" viewBox="0 0 5 12"><circle cx="1" cy="1" r="0.8" fill="#c8c8c8"/><circle cx="4" cy="3.5" r="0.8" fill="#c8c8c8"/><circle cx="1" cy="6" r="0.8" fill="#c8c8c8"/><circle cx="4" cy="8.5" r="0.8" fill="#c8c8c8"/><circle cx="1" cy="11" r="0.8" fill="#c8c8c8"/></svg>
</div>
<div class="a" style="left:1670px;top:937px;width:178px;height:29px;background:#ffffff"></div>
<svg style="left:1643px;top:930px" width="40" height="40" viewBox="0 0 40 40"><g transform="rotate(-16.5 20.2 19.9)"><rect x="6" y="5.7" width="28.4" height="28.4" rx="3.5" fill="#f26a26"/></g><g transform="translate(20.4 20.6) rotate(-14) scale(1.42 0.78)"><text x="0" y="11.8" font-family="'Liberation Sans',sans-serif" font-size="33" font-weight="bold" font-style="italic" fill="#ffffff" text-anchor="middle">S</text></g></svg>
<div class="t" style="left:1687.2px;top:942.4px;color:#2472c8;font-family:'Liberation Sans','Noto Sans CJK SC',sans-serif;font-size:18px;font-weight:bold;line-height:22px;">中</div>
<svg style="left:1716px;top:947px" width="17" height="14" viewBox="0 0 17 14"><circle cx="3.6" cy="3.6" r="2.3" fill="none" stroke="#2472c8" stroke-width="1.7"/><path d="M11.2 5.2H15V8.3C15 10.6 13.6 12 11.5 12.6V11C12.6 10.6 13 9.9 13 9H11.2Z" fill="#2472c8"/></svg>
<svg style="left:1740px;top:942.6px" width="21" height="21" viewBox="0 0 21 21"><circle cx="10.3" cy="10.6" r="8.9" fill="none" stroke="#2472c8" stroke-width="2.2"/><rect x="6.2" y="5.8" width="2.1" height="4.6" rx="1" fill="#2472c8"/><rect x="12.3" y="5.8" width="2.1" height="4.6" rx="1" fill="#2472c8"/><path d="M5.6 12.4C7 16.4 13.6 16.4 15 12.4" stroke="#2472c8" stroke-width="1.9" fill="none"/></svg>
<svg style="left:1770px;top:942.5px" width="16" height="20" viewBox="0 0 16 20"><rect x="4.3" y="0" width="7.4" height="12.3" rx="3.7" fill="#2472c8"/><path d="M1 8.2C1 17 15 17 15 8.2" stroke="#2472c8" stroke-width="2" fill="none"/><path d="M8 15V18.6M4.2 19H11.8" stroke="#2472c8" stroke-width="2"/></svg>
<svg style="left:1795px;top:945.3px" width="20.5" height="15" viewBox="0 0 20.5 15"><rect x="0" y="0" width="20.5" height="15" rx="2" fill="#2472c8"/><path d="M2.6 4H18M2.6 7.4H18" stroke="#ffffff" stroke-width="1.7" stroke-dasharray="2.2 1.1"/><path d="M5.2 11H15.4" stroke="#ffffff" stroke-width="1.8"/></svg>
<svg style="left:1824.5px;top:943px" width="24" height="21" viewBox="0 0 24 21"><circle cx="7.2" cy="4.4" r="4.2" fill="#bfc3cb"/><path d="M0 18.5C0 12 3 9.5 7.2 9.5C10 9.5 12 10.5 13 12.5V18.5Z" fill="#bfc3cb"/><rect x="8" y="11.5" width="16" height="8" fill="#eceef2"/><text x="9" y="19" font-family="'Liberation Sans',sans-serif" font-size="9" font-weight="bold" fill="#c5c8cf">20</text></svg>
</body></html>
